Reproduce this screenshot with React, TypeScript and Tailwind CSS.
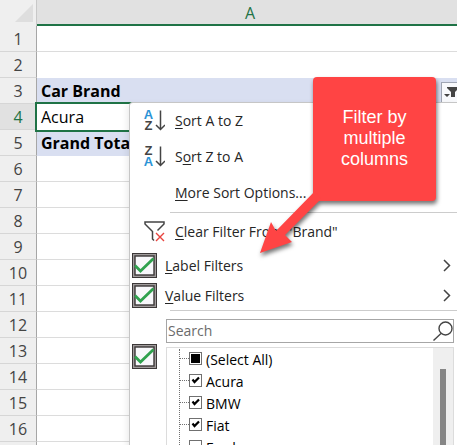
import type { ReactNode } from "react";

const rows = Array.from({ length: 17 }, (_, i) => i + 1);

const cellText: Record<number, string> = {
  3: "Car Brand",
  4: "Acura",
  5: "Grand Total",
};

function SortIcon({ top, bottom, blueFirst }: { top: string; bottom: string; blueFirst: boolean }) {
  return (
    <span className="flex w-[21px] items-center gap-[2px]" aria-hidden="true">
      <span className="flex w-[9px] flex-col items-center font-['Liberation_Sans',sans-serif] text-[13px] leading-[11px] font-bold">
        <span className={blueFirst ? "text-[#2b93d6]" : "text-[#444444]"}>{top}</span>
        <span className={blueFirst ? "text-[#444444]" : "text-[#2b93d6]"}>{bottom}</span>
      </span>
      <svg width="10" height="21" viewBox="0 0 10 21" fill="none" stroke="#444" strokeWidth="1.5">
        <path d="M5.5 0.5V19.5M1 15L5.5 19.5L10 15" />
      </svg>
    </span>
  );
}

function ClearIcon() {
  return (
    <svg width="21" height="21" viewBox="0 0 21 21" fill="none" aria-hidden="true">
      <path d="M10 19.5L8.5 18V10.5L1 3V1H20V3L13.5 9.5" stroke="#444" strokeWidth="1.5" />
      <path d="M12 12L20 20M20 12L12 20" stroke="#e8443f" strokeWidth="1.4" />
    </svg>
  );
}

function BigCheck({ label }: { label: string }) {
  return (
    <span className="grid size-[25px] shrink-0">
      <input
        type="checkbox"
        defaultChecked
        aria-label={label}
        className="col-start-1 row-start-1 size-[25px] appearance-none border border-[#3b3737] bg-[#a09c9c]"
      />
      <svg className="pointer-events-none col-start-1 row-start-1" width="25" height="25" viewBox="0 0 25 25" fill="none">
        <rect x="3" y="3" width="19" height="19" fill="#f8f8fb" stroke="#3b3737" strokeWidth="1.4" />
        <path d="M3 12.5L8.5 18L21.5 5.5" stroke="#30a14e" strokeWidth="2.8" />
      </svg>
    </span>
  );
}

function SmallCheck({ id, state }: { id: string; state: "some" | "on" | "off" }) {
  return (
    <span className="mb-1 grid size-[13px] shrink-0">
      <input
        id={id}
        type="checkbox"
        defaultChecked={state !== "off"}
        className="col-start-1 row-start-1 size-[13px] appearance-none border border-[#707070] bg-white"
      />
      <svg className="pointer-events-none col-start-1 row-start-1" width="13" height="13" viewBox="0 0 13 13" fill="none">
        {state === "some" && <rect x="2" y="2" width="9" height="9" fill="#000" />}
        {state === "on" && <path d="M3.5 5.5L5.5 8L10 3.5" stroke="#000" strokeWidth="2.2" />}
      </svg>
    </span>
  );
}

function MenuItem({ icon, children }: { icon?: ReactNode; children: ReactNode }) {
  return (
    <button type="button" className="flex h-9 w-full items-center pb-[2px] pl-[14px] text-left whitespace-nowrap">
      <span className="w-[31px] shrink-0">{icon}</span>
      <span>{children}</span>
    </button>
  );
}

function SubMenuItem({ name, children }: { name: string; children: ReactNode }) {
  return (
    <div className="flex h-[30px] items-center gap-2 pl-[2px]">
      <BigCheck label={name} />
      <button type="button" className="flex h-full grow items-center justify-between pr-[6px] text-left">
        <span>{children}</span>
        <svg width="8" height="13" viewBox="0 0 8 13" fill="none" stroke="#444" strokeWidth="1.5" aria-hidden="true">
          <path d="M1 1L6.5 6.5L1 12" />
        </svg>
      </button>
    </div>
  );
}

function Brand({ name, state }: { name: string; state: "some" | "on" | "off" }) {
  const id = "brand-" + name.replace(/\W/g, "").toLowerCase();
  return (
    <li className="flex h-[22px] items-center">
      <span className="mb-1 w-[9px] border-t border-dotted border-[#707070]" />
      <SmallCheck id={id} state={state} />
      <label htmlFor={id} className="pl-1 leading-[22px]">
        {name}
      </label>
    </li>
  );
}

const key = "underline decoration-1 underline-offset-2";

export default function App() {
  return (
    <main className="relative h-screen overflow-hidden bg-white font-['Open_Sans','Noto_Sans',sans-serif] text-[14px] text-[#262626]">
      <table className="w-full table-fixed border-separate border-spacing-0 text-[16px]">
        <colgroup>
          <col className="w-[37px]" />
          <col />
        </colgroup>
        <thead>
          <tr className="h-[26px]">
            <th className="border-r border-[#c8c8c8] bg-[#efefef] p-0">
              <svg className="ml-auto mr-[3px]" width="18" height="18" viewBox="0 0 18 18" aria-hidden="true">
                <path d="M18 0V18H0Z" fill="#dedede" />
              </svg>
            </th>
            <th className="border-b-2 border-[#1f7346] bg-[#e1e1e1] p-0 pt-[2px] pl-[6px] text-center leading-[22px] font-normal text-[#1f7346]">
              A
            </th>
          </tr>
        </thead>
        <tbody>
          {rows.map((n) => {
            const shaded = n === 3 || n === 5;
            const selected = n === 4;
            return (
              <tr key={n} className="h-[26px]">
                <th
                  className={`border-r border-b border-r-[#a6a6a6] border-b-[#d6d6d6] p-0 pt-[2px] text-center leading-[23px] font-normal ${
                    selected ? "bg-[#e1e1e1] text-[#1f7346]" : "bg-[#efefef] text-[#444444]"
                  }`}
                >
                  {n}
                </th>
                <td
                  className={`p-0 leading-[23px] text-black ${
                    shaded ? "bg-[#d9dff1] font-bold" : ""
                  } ${selected ? "outline-2 outline-[#1f7346]" : ""} ${
                    n === 2 || shaded || selected ? "border-b border-transparent" : "border-b border-[#dcdcdc]"
                  }`}
                >
                  <div className="flex h-[25px] items-start justify-between pl-1 whitespace-nowrap">
                    <span className="pt-[2px]">{cellText[n]}</span>
                    {n === 3 && (
                      <button
                        type="button"
                        aria-label="Filter"
                        className="mt-1 -mr-[5px] h-[21px] w-[21px] border border-[#a0a6b4] bg-[#f8f9fc]"
                      >
                        <svg width="19" height="19" viewBox="0 0 19 19" fill="#444" aria-hidden="true">
                          <path d="M5 4H17V5L13 9V14H9V9L5 5ZM2 11H8L5 14Z" />
                        </svg>
                      </button>
                    )}
                  </div>
                </td>
              </tr>
            );
          })}
        </tbody>
      </table>

      <section
        aria-label="Filter menu"
        className="absolute top-[102px] right-0 left-[129px] rounded-tl border-t border-l border-[#c6c6c6] bg-white shadow-[-2px_2px_6px_rgba(0,0,0,0.08)]"
      >
        <MenuItem icon={<SortIcon top="A" bottom="Z" blueFirst />}>
          <span className={key}>S</span>ort A to Z
        </MenuItem>
        <MenuItem icon={<SortIcon top="Z" bottom="A" blueFirst={false} />}>
          S<span className={key}>o</span>rt Z to A
        </MenuItem>
        <MenuItem>
          <span className={key}>M</span>ore Sort Options...
        </MenuItem>
        <hr className="my-[1px] ml-10 border-[#cccccc]" />
        <MenuItem icon={<ClearIcon />}>
          <span className={key}>C</span>lear Filter From "Brand"
        </MenuItem>
        <SubMenuItem name="Label Filters">
          <span className={key}>L</span>abel Filters
        </SubMenuItem>
        <SubMenuItem name="Value Filters">
          <span className={key}>V</span>alue Filters
        </SubMenuItem>
        <hr className="mb-2 ml-10 border-[#cccccc]" />

        <div className="mr-[3px] ml-9 flex h-6 items-center border border-[#a6a6a6]">
          <input
            type="search"
            aria-label="Search"
            placeholder="Search"
            className="w-0 grow pl-[1px] leading-5 outline-none placeholder:text-[#6b6b6b]"
          />
          <svg width="20" height="20" viewBox="0 0 20 20" fill="none" stroke="#444" strokeWidth="1.4" aria-hidden="true">
            <circle cx="12.5" cy="7.5" r="6.5" />
            <path d="M8 12.5L0.5 19.5" />
          </svg>
        </div>

        <div className="mt-1 mr-[3px] flex items-start pl-[2px]">
          <div className="-mt-[3px] mr-[9px]">
            <BigCheck label="Brand list" />
          </div>
          <div className="flex grow justify-between border border-[#dcdcdc]">
            <ul className="mt-[1px] ml-3 border-l border-dotted border-[#707070] text-black">
              <Brand name="(Select All)" state="some" />
              <Brand name="Acura" state="on" />
              <Brand name="BMW" state="on" />
              <Brand name="Fiat" state="on" />
              <Brand name="Ford" state="off" />
            </ul>
            <div className="flex w-5 justify-center bg-[#efefef] pt-[21px]">
              <div className="w-[6px] bg-[#868686]" />
            </div>
          </div>
        </div>
      </section>

      <aside className="absolute top-[77px] left-[313px] w-[123px] drop-shadow-[1px_3px_2px_rgba(0,0,0,0.55)]">
        <p className="h-[124px] rounded bg-[#ff4444] px-5 pt-[30px] text-center font-['Liberation_Sans',Arial,sans-serif] text-[18px] leading-[21px] text-white">
          Filter by multiple columns
        </p>
        <svg className="absolute top-[113px] -left-[53px]" width="62" height="64" viewBox="0 0 62 64" fill="#ff4444" aria-hidden="true">
          <path d="M0 63L11 32L16 41L55 1L61 9L25 45L32 52Z" />
        </svg>
      </aside>
    </main>
  );
}
